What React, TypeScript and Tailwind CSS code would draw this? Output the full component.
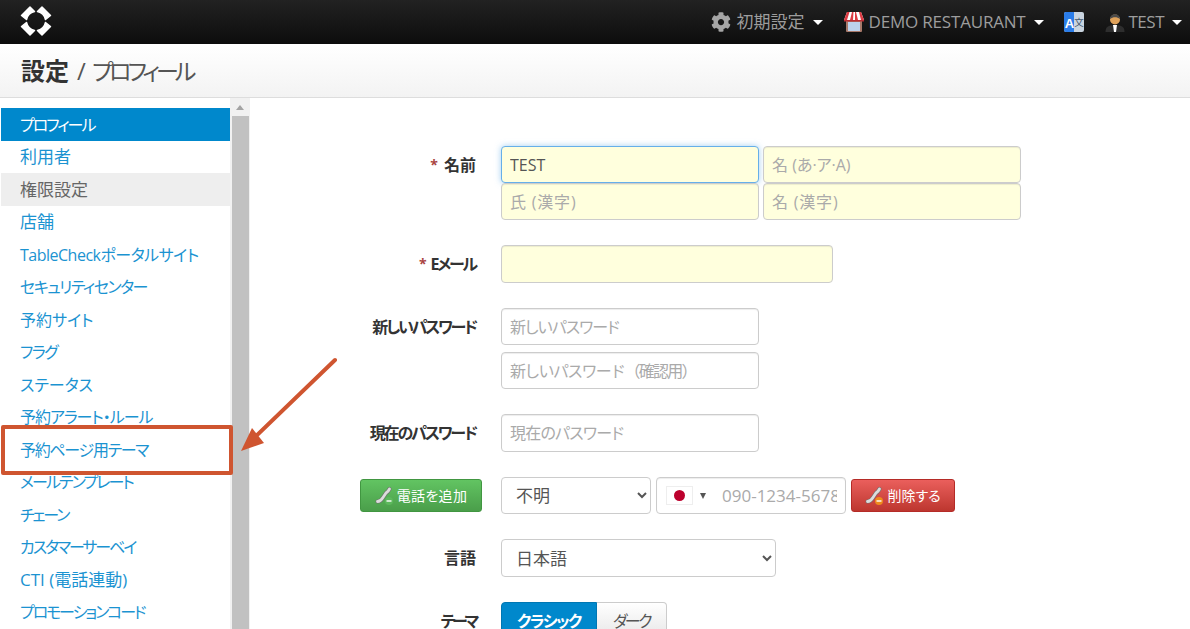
import React from 'react';
import { FaCog } from 'react-icons/fa';

const sideItems = [
  { label: 'プロフィール', cls: 'text-[16px] tracking-[-2px]' },
  { label: '利用者', cls: 'text-[17px] pb-[2px]' },
  { label: '権限設定', cls: 'text-[17px]' },
  { label: '店舗', cls: 'text-[17px] pb-[2px]' },
  { label: 'TableCheckポータルサイト', cls: 'text-[16px] tracking-[-0.5px]' },
  { label: 'セキュリティセンター', cls: 'text-[16px] tracking-[-1.5px]' },
  { label: '予約サイト', cls: 'text-[16px]' },
  { label: 'フラグ', cls: 'text-[16px] tracking-[-1.5px]' },
  { label: 'ステータス', cls: 'text-[16px]' },
  { label: '予約アラート・ルール', cls: 'text-[16px] tracking-[-1px]' },
  { label: '予約ページ用テーマ', cls: 'text-[16px] tracking-[-1.3px]' },
  { label: 'メールテンプレート', cls: 'text-[16px] tracking-[-1.9px]' },
  { label: 'チェーン', cls: 'text-[16px] tracking-[-2.2px]' },
  { label: 'カスタマーサーベイ', cls: 'text-[16px] tracking-[-2.1px]' },
  { label: 'CTI (電話連動)', cls: 'text-[17px]' },
  { label: 'プロモーションコード', cls: 'text-[16px] tracking-[-2.1px]' },
];

const Caret = () => (
  <span className="ml-2 inline-block h-0 w-0 border-x-[5px] border-t-[5px] border-x-transparent border-t-white" />
);

const Logo = () => {
  const piece = 'M1.5 10.5 L10 2 L14.5 6.5 A10.5 10.5 0 0 0 6.5 14.5 Z';
  return (
    <svg className="mb-[2px]" width="32" height="32" viewBox="0 0 32 32" fill="#fff" stroke="#fff" strokeWidth="1.5" strokeLinejoin="round">
      <path d={piece} />
      <path d={piece} transform="matrix(-1 0 0 1 32 0)" />
      <path d={piece} transform="matrix(1 0 0 -1 0 32)" />
      <path d={piece} transform="matrix(-1 0 0 -1 32 32)" />
    </svg>
  );
};

const ShopIcon = () => (
  <svg width="20" height="20" viewBox="0 0 20 20">
    <rect x="2" y="8" width="16" height="12" rx="1" fill="#a8796a" />
    <rect x="4" y="10" width="12" height="9" fill="#bcd2ec" />
    <path d="M3 0h14l3 8H0z" fill="#fff" />
    <path d="M3 0h2.5L3 8H0zM8 0h1.5L9 8H6zM11 0h1l2 8h-3zM15 0h2l3 8h-3z" fill="#dc3a42" />
    <rect y="8" width="20" height="1.5" fill="#b92c33" />
  </svg>
);

const TranslateIcon = () => (
  <svg width="20" height="20" viewBox="0 0 20 20">
    <rect width="20" height="20" rx="2" fill="#c9d4df" />
    <path d="M0 2a2 2 0 0 1 2-2h8v20H2a2 2 0 0 1-2-2z" fill="#2b7de9" />
    <text x="5.5" y="15.5" fontSize="13" fontWeight="700" textAnchor="middle" fill="#fff" fontFamily="Liberation Sans">A</text>
    <text x="15" y="14" fontSize="9.5" textAnchor="middle" fill="#44546a" fontFamily="Noto Sans CJK JP">文</text>
  </svg>
);

const PersonIcon = () => (
  <svg width="20" height="20" viewBox="0 0 20 20">
    <path d="M0.5 20c0-5 2.5-7 9.5-7s9.5 2 9.5 7z" fill="#2e2e2e" />
    <path d="M8 13h4l-1 7H9z" fill="#fff" />
    <circle cx="10" cy="7.5" r="5" fill="#e0a25a" />
    <path d="M5 7C5 0.5 15 0.5 15 7 12 4.5 8 4.5 5 7z" fill="#4a4a4a" />
  </svg>
);

const PhoneIcon = ({ badge }: { badge: string }) => (
  <svg width="20" height="20" viewBox="0 0 20 20" fill="none" strokeLinecap="round">
    <path d="M2.5 15.5 C5 15.5 6.5 14 8 11.5 L11 7 C12.5 6 13.5 5 14.5 3" stroke="#6f6f6f" strokeWidth="4" />
    <path d="M2.5 15.5 C5 15.5 6.5 14 8 11.5 L11 7 C12.5 6 13.5 5 14.5 3" stroke="#dcdcdc" strokeWidth="2.8" />
    <circle cx="14" cy="15" r="4" fill={badge} />
    <rect x="11.5" y="14.3" width="5" height="1.4" fill="#fff" />
  </svg>
);

const inputBase =
  'rounded border px-[8px] text-[16px] text-[#555] placeholder:text-[#aaa] outline-none';
const inputEdge = 'border-[#ccc] shadow-[inset_0_1px_1px_rgba(0,0,0,0.075)]';

const FormRow = ({ label, required, cls, className, children }: { label: string; required?: boolean; cls?: string; className?: string; children: React.ReactNode }) => (
  <div className={`flex ${className ?? ''}`}>
    <label className={`flex h-[37px] w-[226px] shrink-0 items-center justify-end text-[16px] font-bold text-[#333] ${cls ?? ''}`}>
      {required && <span className="mr-[6px] text-[14px] text-[#a94442]">*</span>}
      {label}
    </label>
    <div className="ml-[25px]">{children}</div>
  </div>
);

export default function App() {
  return (
    <div className="relative h-[629px] w-[1190px] overflow-hidden bg-white font-['Open_Sans','Noto_Sans_CJK_JP',sans-serif] [font-feature-settings:'palt']">
      <nav className="flex h-[44px] items-center justify-between bg-gradient-to-b from-[#222] to-[#0d0d0d] pl-[20px] pr-[8px] text-[17px] text-[#9d9d9d]">
        <Logo />
        <div className="flex items-center">
          <FaCog className="mr-[6px] h-5 w-5 text-[#a5a5a5]" />
          <span>初期設定</span>
          <Caret />
          <span className="ml-[21px] mr-[5px]"><ShopIcon /></span>
          <span className="tracking-[-0.2px]">DEMO RESTAURANT</span>
          <Caret />
          <span className="ml-[20px]"><TranslateIcon /></span>
          <span className="ml-[21px] mr-[4px]"><PersonIcon /></span>
          <span className="tracking-[-0.5px]">TEST</span>
          <Caret />
        </div>
      </nav>

      <header className="mt-px flex h-[53px] items-center border-b border-[#ddd] bg-gradient-to-b from-white to-[#f3f3f3] pl-[21px] text-[24px] text-[#555]">
        <strong className="font-bold text-[#333]">設定</strong>
        <span className="ml-[8px]">/ <span className="text-[23px] tracking-[-4px]">プロフィール</span></span>
      </header>

      <div className="flex">
        <aside className="flex h-[531px] w-[250px] shrink-0">
          <ul className="mt-[10px] w-[230px] pl-[1px] text-[#1b93d1]">
            {sideItems.map((item, i) => (
              <li
                key={item.label}
                className={`flex h-[32.5px] items-center pl-[19px] pt-[1px] ${item.cls} ${i === 0 ? 'bg-[#0088cc] text-white' : ''} ${i === 2 ? 'bg-[#eee] text-[#666]' : ''}`}
              >
                {item.label}
              </li>
            ))}
          </ul>
          <div className="flex w-[20px] flex-col items-center bg-[#f1f1f1]">
            <span className="mt-[7px] h-0 w-0 border-x-[4px] border-b-[5px] border-x-transparent border-b-[#a3a3a3]" />
            <div className="mt-[6px] h-full w-[17px] bg-[#c1c1c1]" />
          </div>
        </aside>

        <main className="pt-[48px]">
          <FormRow label="名前" required>
            <div className="grid grid-cols-[258px_258px] gap-x-[4px]">
              <input defaultValue="TEST" className={`${inputBase} h-[37px] border-[#66afe9] bg-[#ffffdd] shadow-[0_0_6px_rgba(102,175,233,0.6)]`} />
              <input placeholder="名 (あ·ア·A)" className={`${inputBase} ${inputEdge} h-[37px] bg-[#ffffdd]`} />
              <input placeholder="氏 (漢字)" className={`${inputBase} ${inputEdge} h-[37px] bg-[#ffffdd] tracking-[0.8px]`} />
              <input placeholder="名 (漢字)" className={`${inputBase} ${inputEdge} h-[37px] bg-[#ffffdd] tracking-[0.8px]`} />
            </div>
          </FormRow>

          <FormRow label="Eメール" required cls="tracking-[-2.2px]" className="mt-[25px]">
            <input className={`${inputBase} ${inputEdge} block h-[38px] w-[332px] bg-[#ffffdd]`} />
          </FormRow>

          <FormRow label="新しいパスワード" cls="tracking-[-2.2px]" className="mt-[25px]">
            <div className="flex flex-col gap-[7px]">
              <input placeholder="新しいパスワード" className={`${inputBase} ${inputEdge} h-[37px] w-[258px] tracking-[-1px]`} />
              <input placeholder="新しいパスワード（確認用）" className={`${inputBase} ${inputEdge} h-[37px] w-[258px] tracking-[-1.7px] [font-feature-settings:normal]`} />
            </div>
          </FormRow>

          <FormRow label="現在のパスワード" cls="tracking-[-2.1px]" className="mt-[25px]">
            <input placeholder="現在のパスワード" className={`${inputBase} ${inputEdge} block h-[38px] w-[258px] tracking-[-0.8px]`} />
          </FormRow>

          <div className="mt-[25px] flex h-[37px] items-center">
            <button className="ml-[110px] flex h-[33px] w-[122px] items-center justify-center rounded-[3px] border border-[#419641] bg-gradient-to-b from-[#62c462] to-[#4a9e4a] text-[14px] text-white">
              <PhoneIcon badge="#5cb85c" />
              <span className="ml-[2px] tracking-[0.3px]">電話を追加</span>
            </button>
            <select defaultValue="unknown" className="ml-[19px] h-[37px] w-[150px] rounded border border-[#ccc] bg-white px-[10px] text-[17px] text-[#555]">
              <option value="unknown">不明</option>
            </select>
            <div className="relative ml-[5px] h-[37px] w-[190px]">
              <input placeholder="090-1234-5678" className={`${inputBase} ${inputEdge} h-[37px] w-[190px] pl-[65px] text-[17px]`} />
              <span className="absolute left-[10px] top-[9px] flex h-[19px] w-[27px] items-center justify-center border border-[#eee] bg-white">
                <span className="h-[11px] w-[11px] rounded-full bg-[#bc002d]" />
              </span>
              <span className="absolute left-[44px] top-[16px] h-0 w-0 border-x-[3.5px] border-t-[6px] border-x-transparent border-t-[#555]" />
            </div>
            <button className="ml-[5px] flex h-[33px] w-[104px] items-center justify-center rounded-[3px] border border-[#b52b27] bg-gradient-to-b from-[#ea5f5c] to-[#bd362f] text-[14px] text-white">
              <PhoneIcon badge="#ee8a1d" />
              <span className="ml-[2px]">削除する</span>
            </button>
          </div>

          <FormRow label="言語" className="mt-[25px]">
            <select defaultValue="ja" className="block h-[38px] w-[275px] rounded border border-[#ccc] bg-white px-[10px] text-[17px] text-[#555]">
              <option value="ja">日本語</option>
            </select>
          </FormRow>

          <FormRow label="テーマ" cls="tracking-[-3.3px]" className="mt-[25px]">
            <div className="flex h-[38px] text-[16px]">
              <button className="w-[96px] rounded-l border border-[#0077b3] bg-[#0088cc] font-bold tracking-[-1.5px] text-white">クラシック</button>
              <button className="w-[70px] rounded-r border border-l-0 border-[#ccc] bg-gradient-to-b from-white to-[#e6e6e6] tracking-[-2.5px] text-[#555]">ダーク</button>
            </div>
          </FormRow>
        </main>
      </div>

      {/* callout drawn over the screenshot */}
      <div className="absolute left-[1px] top-[425px] h-[50px] w-[232px] rounded-[2px] border-[4px] border-[#cf5530]" />
      <svg className="absolute left-[235px] top-[355px]" width="105" height="100" viewBox="0 0 105 100">
        <line x1="100" y1="5" x2="20" y2="82" stroke="#cf5530" strokeWidth="4" strokeLinecap="round" />
        <polygon points="6,96 17,73 29,88" fill="#cf5530" />
      </svg>
    </div>
  );
}
